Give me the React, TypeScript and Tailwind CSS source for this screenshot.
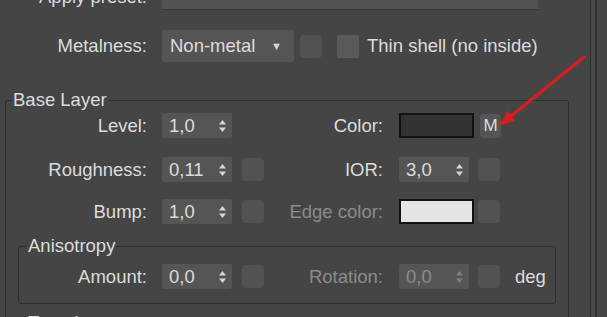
import React from 'react';

// 3ds Max / Corona material rollout, dark UI
const TEXT = 'text-[#dcdcdc]';
const DIM = 'text-[#8b8b8b]';

function Arrows({ dim }: { dim?: boolean }) {
  const c = dim ? '#7d7d7d' : '#d6d6d6';
  return (
    <svg width="9" height="14" viewBox="0 0 9 14">
      <path d="M4.5 1 L8 5.5 L1 5.5 Z" fill={c} />
      <path d="M1 8.5 L8 8.5 L4.5 13 Z" fill={c} />
    </svg>
  );
}

function Spinner({ value, dim }: { value: string; dim?: boolean }) {
  return (
    <div className="flex h-[25px] w-[70px] shrink-0 items-center justify-between rounded-[2px] bg-[#555555] pl-[7px] pr-[5px]">
      <span className={dim ? DIM : TEXT}>{value}</span>
      <Arrows dim={dim} />
    </div>
  );
}

function MapBtn({ className = '' }: { className?: string }) {
  return <div className={`h-[23px] w-[22px] shrink-0 rounded-[4px] bg-[#525252] ${className}`} />;
}

function Swatch({ fill }: { fill: string }) {
  return <div className={`h-[25px] w-[75px] shrink-0 border-2 border-[#121212] ${fill}`} />;
}

export default function App() {
  return (
    <div className="relative flex h-[317px] w-[607px] overflow-hidden bg-[#454545] font-['Liberation_Sans',Arial,sans-serif] text-[18.5px] leading-[20px]">
      <div className="flex w-[590px] shrink-0 flex-col">
        {/* Apply preset (cut off at top) */}
        <div className="mt-[-16px] flex h-[26px] items-center">
          <span className={`w-[147px] text-right ${TEXT}`}>Apply preset:</span>
          <div className="ml-[15px] h-[26px] w-[376px] border-b border-[#353535] bg-[#525252]" />
        </div>

        {/* Metalness */}
        <div className="mt-[20px] flex h-[32px] items-center">
          <span className={`w-[147px] text-right ${TEXT}`}>Metalness:</span>
          <div className="ml-[15px] flex h-[32px] w-[132px] items-center justify-between rounded-[2px] bg-[#555555] pl-[8px] pr-[12px]">
            <span className={TEXT}>Non-metal</span>
            <span className="text-[11px] text-[#d6d6d6]">▼</span>
          </div>
          <MapBtn className="ml-[6px]" />
          <div className="ml-[15px] h-[23px] w-[22px] bg-[#5a5a5a]" />
          <span className={`ml-[8px] ${TEXT}`}>Thin shell (no inside)</span>
        </div>

        {/* Base Layer */}
        <fieldset className="ml-[5px] mt-[28px] w-[564px] rounded-[3px] border border-[#2e2e2e]">
          <legend className={`ml-[5px] px-[2px] leading-[20px] ${TEXT}`}>Base Layer</legend>

          <div className="mt-[3px] flex h-[25px] items-center">
            <span className={`w-[141px] text-right ${TEXT}`}>Level:</span>
            <div className="ml-[15px]"><Spinner value="1,0" /></div>
            <div className="ml-[10px] w-[22px]" />
            <span className={`w-[119px] text-right ${TEXT}`}>Color:</span>
            <div className="ml-[16px]"><Swatch fill="bg-[#333333]" /></div>
            <div className={`ml-[6px] flex h-[24px] w-[21px] items-center justify-center rounded-[4px] bg-[#555555] text-[17px] ${TEXT}`}>M</div>
          </div>

          <div className="mt-[19px] flex h-[25px] items-center">
            <span className={`w-[141px] text-right ${TEXT}`}>Roughness:</span>
            <div className="ml-[15px]"><Spinner value="0,11" /></div>
            <MapBtn className="ml-[10px]" />
            <span className={`w-[119px] text-right ${TEXT}`}>IOR:</span>
            <div className="ml-[16px]"><Spinner value="3,0" /></div>
            <MapBtn className="ml-[9px]" />
          </div>

          <div className="mt-[17px] flex h-[25px] items-center">
            <span className={`w-[141px] text-right ${TEXT}`}>Bump:</span>
            <div className="ml-[15px]"><Spinner value="1,0" /></div>
            <MapBtn className="ml-[10px]" />
            <span className={`w-[119px] text-right ${DIM}`}>Edge color:</span>
            <div className="ml-[16px]"><Swatch fill="bg-[#e4e4e4]" /></div>
            <MapBtn className="ml-[4px]" />
          </div>

          {/* Anisotropy */}
          <fieldset className="ml-[12px] mt-[12px] w-[538px] rounded-[3px] border border-[#2e2e2e] pb-[14px]">
            <legend className={`ml-[8px] px-[1px] leading-[20px] ${TEXT}`}>Anisotropy</legend>
            <div className="mt-[8px] flex h-[25px] items-center">
              <span className={`w-[128px] text-right ${TEXT}`}>Amount:</span>
              <div className="ml-[15px]"><Spinner value="0,0" /></div>
              <MapBtn className="ml-[10px]" />
              <span className={`w-[119px] text-right ${DIM}`}>Rotation:</span>
              <div className="ml-[16px]"><Spinner value="0,0" dim /></div>
              <MapBtn className="ml-[9px]" />
              <span className={`ml-[15px] ${TEXT}`}>deg</span>
            </div>
          </fieldset>

          {/* Translucency (cut off at bottom) */}
          <fieldset className="ml-[12px] mt-[9px] h-[40px] w-[538px] rounded-[3px] border border-[#2e2e2e]">
            <legend className={`ml-[8px] px-[1px] leading-[20px] ${TEXT}`}>Translucency</legend>
          </fieldset>
        </fieldset>
      </div>

      {/* right edge: rollout frame */}
      <div className="h-full w-[1px] bg-[#2f2f2f]" />
      <div className="h-full w-[4px] bg-[#4a4a4a]" />
      <div className="h-full w-[2px] bg-[#303030]" />

      {/* red annotation arrow */}
      <svg className="pointer-events-none absolute left-0 top-0" width="607" height="317" viewBox="0 0 607 317">
        <line x1="584" y1="57" x2="510" y2="117" stroke="#d21f1f" strokeWidth="3.5" strokeLinecap="round" />
        <polygon points="499,126 515.5,120.5 507.5,110.5" fill="#d21f1f" />
      </svg>
    </div>
  );
}
